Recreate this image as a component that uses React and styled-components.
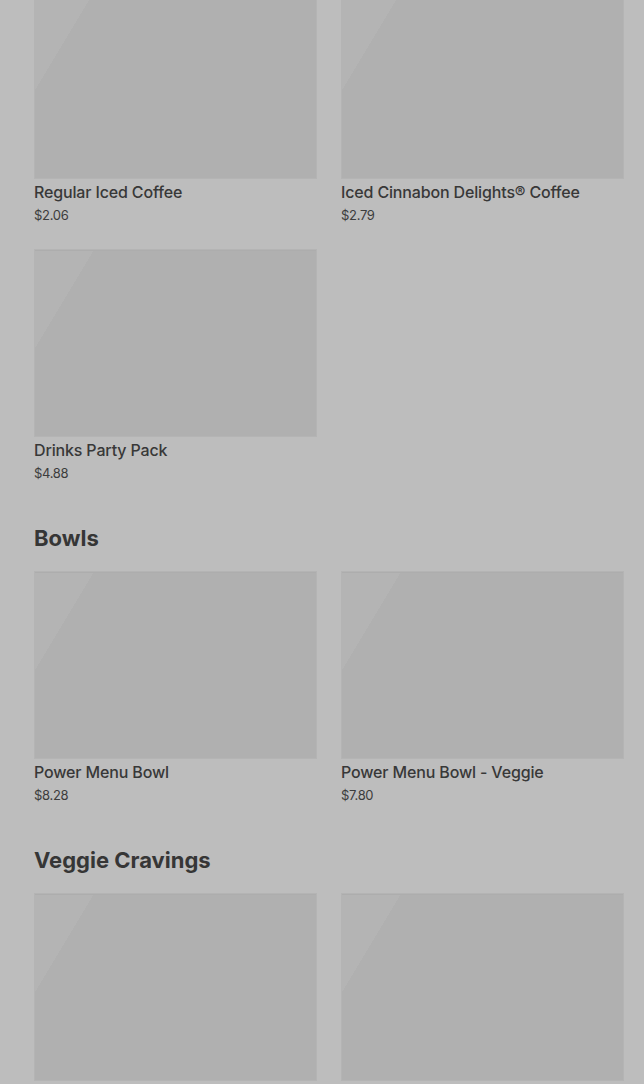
import React from "react";
import styled, { createGlobalStyle } from "styled-components";

const sections = [
  {
    title: null,
    items: [
      { name: "Regular Iced Coffee", price: "$2.06" },
      { name: "Iced Cinnabon Delights® Coffee", price: "$2.79" },
      { name: "Drinks Party Pack", price: "$4.88" },
    ],
  },
  {
    title: "Bowls",
    items: [
      { name: "Power Menu Bowl", price: "$8.28" },
      { name: "Power Menu Bowl - Veggie", price: "$7.80" },
    ],
  },
  {
    title: "Veggie Cravings",
    items: [
      { name: "", price: "" },
      { name: "", price: "" },
    ],
  },
];

function App() {
  return (
    <>
      <GlobalStyle />
      <Page>
        {sections.map((section, i) => (
          <Section key={i} $first={!section.title}>
            {section.title && <SectionTitle>{section.title}</SectionTitle>}
            <Grid>
              {section.items.map((item, j) => (
                <Card key={j}>
                  <Thumb />
                  {item.name && <ItemName>{item.name}</ItemName>}
                  {item.price && <Price>{item.price}</Price>}
                </Card>
              ))}
            </Grid>
          </Section>
        ))}
      </Page>
    </>
  );
}

const GlobalStyle = createGlobalStyle`
  html, body {
    margin: 0;
    padding: 0;
    background: #bdbdbd;
    overflow: hidden;
  }
  body {
    font-family: Inter, "Noto Sans", "Liberation Sans", sans-serif;
    color: #383838;
  }
`;

/* list is scrolled a little: first row of images starts above the fold */
const Page = styled.main`
  box-sizing: border-box;
  height: 1093px;
  overflow: hidden;
  padding: 0 20px 0 34px;
  margin-top: -9px;
`;

const Section = styled.section`
  padding-top: ${(p) => (p.$first ? "0" : "39px")};
`;

const SectionTitle = styled.h2`
  margin: 0 0 17px;
  font-size: 22px;
  line-height: 32px;
  font-weight: 700;
  letter-spacing: 0;
  color: #363636;
`;

const Grid = styled.div`
  display: grid;
  grid-template-columns: 283px 283px;
  column-gap: 24px;
  row-gap: 24px;
`;

const Card = styled.div`
  display: flex;
  flex-direction: column;
  height: 234px;
`;

const Thumb = styled.div`
  height: 188px;
  box-sizing: border-box;
  border: 1px solid #b4b4b4;
  box-shadow: inset 0 1px 0 #adadad;
  background: linear-gradient(121deg, #b4b4b4 0 15%, #b0b0b0 15% 100%);
`;

const ItemName = styled.div`
  margin-top: 2px;
  font-size: 16px;
  line-height: 22px;
  font-weight: 500;
  letter-spacing: -0.15px;
  color: #383838;
`;

const Price = styled.div`
  margin-top: 3px;
  font-size: 13px;
  line-height: 18px;
  font-weight: 400;
  letter-spacing: -0.3px;
  color: #3c3c3c;
`;

export default App;
